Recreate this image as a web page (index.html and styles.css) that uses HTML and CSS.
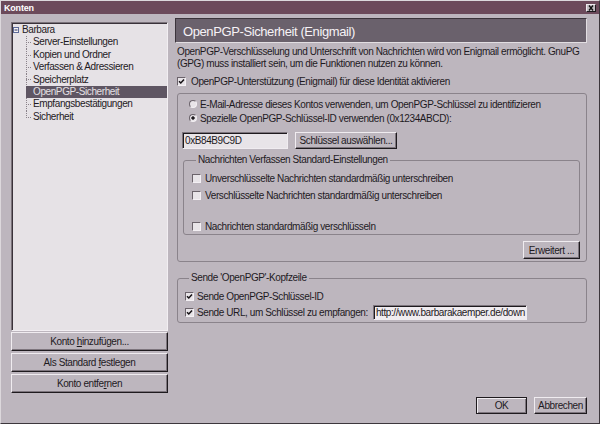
FILE: index.html
```html
<!DOCTYPE html>
<html lang="de">
<head>
<meta charset="utf-8">
<title>Konten</title>
<link rel="stylesheet" href="styles.css">
</head>
<body>
<div class="window">
  <div class="titlebar">
    <span class="title">Konten</span>
    <span class="close"><svg width="8" height="6" viewBox="0 0 8 6"><path d="M2 0.5 L6 5.5 M6 0.5 L2 5.5" stroke="#101010" stroke-width="1.4"/></svg></span>
  </div>
  <div class="main">
    <div class="left">
      <div class="tree">
        <div class="root"><span class="expander"><svg width="6" height="6" viewBox="0 0 6 6"><rect x="0.5" y="0.5" width="5" height="5" fill="#f4f2f4" stroke="#5d6a98"/><path d="M1.5 3 H4.5" stroke="#2a3060"/></svg></span>Barbara</div>
        <div class="children">
          <div class="node">Server-Einstellungen</div>
          <div class="node">Kopien und Ordner</div>
          <div class="node">Verfassen &amp; Adressieren</div>
          <div class="node">Speicherplatz</div>
          <div class="node selected">OpenPGP-Sicherheit</div>
          <div class="node">Empfangsbestätigungen</div>
          <div class="node last">Sicherheit</div>
        </div>
      </div>
      <div class="acct-buttons">
        <div class="btn acct"><span>Konto <u>h</u>inzufügen...</span></div>
        <div class="btn acct"><span>Als Standard <u>f</u>estlegen</span></div>
        <div class="btn acct"><span>Konto entfe<u>r</u>nen</span></div>
      </div>
    </div>
    <div class="right">
      <div class="pane-header">OpenPGP-Sicherheit (Enigmail)</div>
      <p class="desc">OpenPGP-Verschlüsselung und Unterschrift von Nachrichten wird von Enigmail ermöglicht. GnuPG (GPG) muss installiert sein, um die Funktionen nutzen zu können.</p>
      <div class="row enable"><span class="cb"><svg width="7" height="7" viewBox="0 0 7 7"><path d="M1 3.2 L2.8 5 L6 1.5" fill="none" stroke="#141014" stroke-width="1.5"/></svg></span><span>OpenPGP-Unterstützung (Enigmail) für diese Identität aktivieren</span></div>
      <div class="group main-group">
        <div class="row radio-row"><span class="rb"></span><span>E-Mail-Adresse dieses Kontos verwenden, um OpenPGP-Schlüssel zu identifizieren</span></div>
        <div class="row radio-row second"><span class="rb on"></span><span>Spezielle OpenPGP-Schlüssel-ID verwenden (0x1234ABCD):</span></div>
        <div class="key-row">
          <span class="textbox key">0xB84B9C9D</span>
          <span class="btn choose"><span>Schlüssel auswählen...</span></span>
        </div>
        <fieldset class="sub-group">
          <legend>Nachrichten Verfassen Standard-Einstellungen</legend>
          <div class="row sub-check first"><span class="cb"></span><span>Unverschlüsselte Nachrichten standardmäßig unterschreiben</span></div>
          <div class="row sub-check second"><span class="cb"></span><span>Verschlüsselte Nachrichten standardmäßig unterschreiben</span></div>
          <div class="row sub-check third"><span class="cb"></span><span>Nachrichten standardmäßig verschlüsseln</span></div>
        </fieldset>
        <div class="adv-row"><span class="btn adv"><span>Erweitert ...</span></span></div>
      </div>
      <fieldset class="group header-group">
        <legend>Sende 'OpenPGP'-Kopfzeile</legend>
        <div class="row hdr-check first"><span class="cb"><svg width="7" height="7" viewBox="0 0 7 7"><path d="M1 3.2 L2.8 5 L6 1.5" fill="none" stroke="#141014" stroke-width="1.5"/></svg></span><span>Sende OpenPGP-Schlüssel-ID</span></div>
        <div class="row hdr-check url-row"><span class="cb"><svg width="7" height="7" viewBox="0 0 7 7"><path d="M1 3.2 L2.8 5 L6 1.5" fill="none" stroke="#141014" stroke-width="1.5"/></svg></span><span>Sende URL, um Schlüssel zu empfangen:</span><span class="textbox url">http://www.barbarakaemper.de/down</span></div>
      </fieldset>
      <div class="footer">
        <span class="btn default ok"><span>OK</span></span>
        <span class="btn cancel"><span>Abbrechen</span></span>
      </div>
    </div>
  </div>
</div>
</body>
</html>
```
FILE: styles.css
```css
html, body {
  margin: 0;
  padding: 0;
  background: #bdb6be;
}

body {
  font-family: "Liberation Sans", Arial, sans-serif;
  font-size: 10px;
  letter-spacing: -0.4px;
  color: #1e1a1e;
}

.window {
  width: 600px;
  height: 424px;
  box-sizing: border-box;
  border: 1px solid;
  border-color: #dcd8dc #3c363c #3c363c #dcd8dc;
  background: #bdb6be;
  display: flex;
  flex-direction: column;
  overflow: hidden;
}

/* title bar */
.titlebar {
  height: 13px;
  flex: none;
  background: #6c4a5b;
  display: flex;
  align-items: center;
  justify-content: space-between;
  padding: 0 3px 0 3px;
}

.title {
  color: #ffffff;
  font-weight: bold;
  font-size: 9px;
  letter-spacing: -0.2px;
}

.close {
  width: 10px;
  height: 8px;
  box-sizing: border-box;
  background: #c4bec4;
  border: 1px solid;
  border-color: #f0ecf0 #1e1a1e #1e1a1e #f0ecf0;
  display: flex;
  align-items: center;
  justify-content: center;
}

/* main area */
.main {
  flex: 1;
  min-height: 0;
  display: flex;
  gap: 7px;
  padding: 0 12px 9px 10px;
}

.left {
  width: 157px;
  padding-top: 8px;
  display: flex;
  flex-direction: column;
}

.tree {
  height: 309px;
  box-sizing: border-box;
  background: #e6e2e6;
  border: 1px solid;
  border-color: #7b737b #f2eef2 #f2eef2 #7b737b;
  box-shadow: inset 1px 1px #3a323a;
  padding-top: 1px;
  line-height: 12.4px;
}

.root {
  display: flex;
  align-items: center;
  padding-left: 1px;
}

.expander {
  display: flex;
  width: 6px;
  height: 6px;
  margin-right: 3px;
}

.children {
  margin-left: 14px;
}

.node {
  padding-left: 7px;
  background:
    repeating-linear-gradient(to bottom, #8a828a 0 1px, transparent 1px 2px) 0 0 / 1px 100% no-repeat,
    repeating-linear-gradient(to right, #8a828a 0 1px, transparent 1px 2px) 0 50% / 6px 1px no-repeat;
}

.node.last {
  background-size: 1px 50%, 6px 1px;
}

.node.selected {
  background: #5f5663;
  color: #e4e0e4;
}

.acct-buttons {
  margin-top: 1px;
  display: flex;
  flex-direction: column;
  gap: 2px;
}

/* buttons */
.btn {
  box-sizing: border-box;
  display: flex;
  align-items: center;
  justify-content: center;
  background: #bdb6be;
  border: 1px solid;
  border-color: #f0ecf0 #1e1a1e #1e1a1e #f0ecf0;
  box-shadow: inset -1px -1px #7d757d;
  white-space: nowrap;
}

.btn u {
  text-decoration: underline;
}

.btn.acct {
  height: 19px;
}

.btn.default {
  border-color: #1e1a1e;
  box-shadow: inset 1px 1px #f0ecf0, inset -1px -1px #7d757d;
}

/* right pane */
.right {
  width: 412px;
  padding-top: 4px;
  display: flex;
  flex-direction: column;
}

.pane-header {
  height: 25px;
  flex: none;
  box-sizing: border-box;
  background: #6a616c;
  border: 1px solid;
  border-color: #3b343b #e2dee2 #e2dee2 #3b343b;
  color: #f6f2f6;
  font-size: 13px;
  letter-spacing: -0.4px;
  display: flex;
  align-items: center;
  padding: 1px 0 0 7px;
}

.desc {
  margin: 3px 0 0 2px;
  line-height: 12px;
}

.row {
  display: flex;
  align-items: center;
  height: 12px;
  white-space: nowrap;
}

.cb {
  width: 9px;
  height: 9px;
  box-sizing: border-box;
  flex: none;
  background: #e8e4e8;
  border: 1px solid;
  border-color: #6b636b #f4f0f4 #f4f0f4 #6b636b;
  display: flex;
  align-items: center;
  justify-content: center;
}

.rb {
  width: 8px;
  height: 8px;
  box-sizing: border-box;
  flex: none;
  border-radius: 50%;
  border: 1px solid;
  border-color: #6b636b #f4f0f4 #f4f0f4 #6b636b;
  background: #e8e4e8;
}

.rb.on {
  background: radial-gradient(circle, #1e1a1e 0 1.4px, #e8e4e8 1.9px);
}

.enable {
  margin: 5px 0 0 2px;
  gap: 5px;
}

.group {
  border: 1px solid #8a838b;
  border-radius: 3px;
}

.main-group {
  margin: 6px 0 0 2px;
  padding: 4px 6px 2px 4px;
}

.radio-row {
  padding-left: 7px;
  gap: 3px;
}

.radio-row.second {
  margin-top: 2px;
}

.key-row {
  margin-top: 8px;
  display: flex;
  height: 17px;
}

.textbox {
  box-sizing: border-box;
  display: flex;
  align-items: center;
  border: 1px solid;
  border-color: #7d757d #f0ecf0 #f0ecf0 #7d757d;
  box-shadow: inset 1px 1px #1e1a1e;
  background: #e8e4e8;
  padding-left: 2px;
  overflow: hidden;
  white-space: nowrap;
}

.textbox.key {
  width: 106px;
  height: 17px;
}

.btn.choose {
  width: 102px;
  height: 17px;
  margin-left: 7px;
}

fieldset {
  margin: 0;
  min-width: 0;
}

legend {
  padding: 0 2px;
  margin-left: 4px;
  line-height: 12px;
}

.sub-group {
  margin: 5px 0 0 1px;
  padding: 0 6px 2px 8px;
  border: 1px solid #8a838b;
  border-radius: 3px;
}

.sub-check {
  gap: 4px;
}

.sub-check.first {
  margin-top: 6px;
}

.sub-check.second {
  margin-top: 5px;
}

.sub-check.third {
  margin-top: 19px;
}

.adv-row {
  margin-top: 6px;
  display: flex;
  justify-content: flex-end;
}

.btn.adv {
  width: 57px;
  height: 18px;
}

.header-group {
  margin: 10px 0 0 2px;
  padding: 0 6px 2px 7px;
}

.hdr-check {
  gap: 3px;
}

.hdr-check.first {
  margin-top: 6px;
}

.url-row {
  margin-top: 3px;
  height: 15px;
}

.textbox.url {
  width: 154px;
  height: 15px;
  margin-left: 2px;
  background: #f0ecf0;
}

.footer {
  margin-top: auto;
  display: flex;
  justify-content: flex-end;
  gap: 7px;
}

.btn.ok {
  width: 51px;
  height: 17px;
}

.btn.cancel {
  width: 53px;
  height: 17px;
}
```
